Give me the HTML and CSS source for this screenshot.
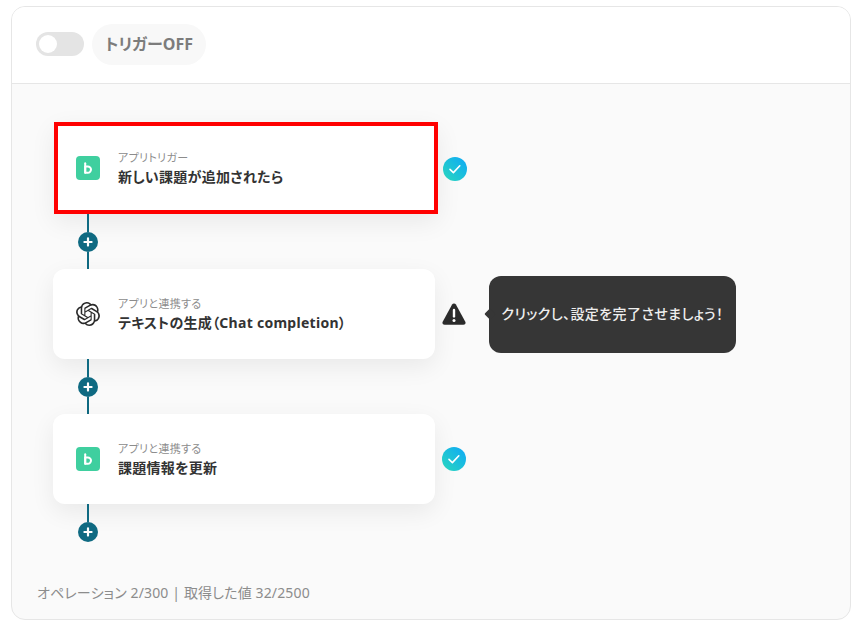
FILE: index.html
```html
<!DOCTYPE html>
<html lang="ja">
<head>
<meta charset="utf-8">
<title>Flow</title>
<link rel="stylesheet" href="styles.css">
</head>
<body>
<main class="panel">
  <header class="panel-head">
    <span class="toggle"><span class="knob"></span></span>
    <span class="pill">トリガーOFF</span>
  </header>
  <section class="panel-body">
    <div class="flow">
      <div class="step step-selected">
        <div class="card card-selected">
          <svg class="app-icon" viewBox="0 0 24 24"><rect width="24" height="24" rx="4" fill="#3fcf9f"/><path d="M9.200 7.200v9.600" fill="none" stroke="#fff" stroke-width="2" stroke-linecap="round"/><path d="M9.200 10.400h2.600a3.200 3.200 0 0 1 0 6.400H9.200z" fill="none" stroke="#fff" stroke-width="2" stroke-linejoin="round"/></svg>
          <div class="card-text"><span class="card-label">アプリトリガー</span><span class="card-title">新しい課題が追加されたら</span></div>
        </div>
        <svg class="status status-selected" viewBox="0 0 24 24"><circle cx="12" cy="12" r="12" fill="url(#g1)"/><path d="M7 12.400l3.400 3.200 6.400-6.800" fill="none" stroke="#fff" stroke-width="1.600" stroke-linecap="round" stroke-linejoin="round"/><defs><linearGradient id="g1" x1="0" y1="1" x2="1" y2="0"><stop offset="0" stop-color="#2ad8bc"/><stop offset="1" stop-color="#0ea8f8"/></linearGradient></defs></svg>
      </div>
      <div class="connector"><span class="line"></span><span class="plus"><svg viewBox="0 0 20 20"><path d="M10 6.400v7.200M6.400 10h7.200" stroke="#fff" stroke-width="2.200" stroke-linecap="round"/></svg></span><span class="line"></span></div>
      <div class="step">
        <div class="card">
          <svg class="app-icon" viewBox="0 0 24 24"><path fill="#2b2b2b" d="M22.2819 9.8211a5.9847 5.9847 0 0 0-.5157-4.9108 6.0462 6.0462 0 0 0-6.5098-2.9A6.0651 6.0651 0 0 0 4.9807 4.1818a5.9847 5.9847 0 0 0-3.9977 2.9 6.0462 6.0462 0 0 0 .7427 7.0966 5.98 5.98 0 0 0 .511 4.9107 6.051 6.051 0 0 0 6.5146 2.9001A5.9847 5.9847 0 0 0 13.2599 24a6.0557 6.0557 0 0 0 5.7718-4.2058 5.9894 5.9894 0 0 0 3.9977-2.9001 6.0557 6.0557 0 0 0-.7475-7.0729zm-9.022 12.6081a4.4755 4.4755 0 0 1-2.8764-1.0408l.1419-.0804 4.7783-2.7582a.7948.7948 0 0 0 .3927-.6813v-6.7369l2.02 1.1686a.071.071 0 0 1 .038.052v5.5826a4.504 4.504 0 0 1-4.4945 4.4944zm-9.6607-4.1254a4.4708 4.4708 0 0 1-.5346-3.0137l.142.0852 4.783 2.7582a.7712.7712 0 0 0 .7806 0l5.8428-3.3685v2.3324a.0804.0804 0 0 1-.0332.0615L9.74 19.9502a4.4992 4.4992 0 0 1-6.1408-1.6464zM2.3408 7.8956a4.485 4.485 0 0 1 2.3655-1.9728V11.6a.7664.7664 0 0 0 .3879.6765l5.8144 3.3543-2.0201 1.1685a.0757.0757 0 0 1-.071 0l-4.8303-2.7865A4.504 4.504 0 0 1 2.3408 7.872zm16.5963 3.8558L13.1038 8.364 15.1192 7.2a.0757.0757 0 0 1 .071 0l4.8303 2.7913a4.4944 4.4944 0 0 1-.6765 8.1042v-5.6772a.79.79 0 0 0-.407-.667zm2.0107-3.0231l-.142-.0852-4.7735-2.7818a.7759.7759 0 0 0-.7854 0L9.409 9.2297V6.8974a.0662.0662 0 0 1 .0284-.0615l4.8303-2.7866a4.4992 4.4992 0 0 1 6.6802 4.66zM8.3065 12.863l-2.02-1.1638a.0804.0804 0 0 1-.038-.0567V6.0742a4.4992 4.4992 0 0 1 7.3757-3.4537l-.142.0805L8.704 5.459a.7948.7948 0 0 0-.3927.6813zm1.0976-2.3654l2.602-1.4998 2.6069 1.4998v2.9994l-2.5974 1.4997-2.6067-1.4997Z"/></svg>
          <div class="card-text"><span class="card-label">アプリと連携する</span><span class="card-title">テキストの生成（Chat completion）</span></div>
        </div>
        <svg class="status" viewBox="0 0 24 24"><path fill="#2b2b2b" d="M12 1.400c.8 0 1.500.4 1.900 1.100l9.400 17.200c.8 1.500-.2 3.100-1.900 3.100H2.600C.9 22.800-.1 21.200.7 19.700l9.400-17.200c.4-.7 1.100-1.100 1.900-1.100z"/><path d="M12 8v6.400" stroke="#fff" stroke-width="2.400" stroke-linecap="round"/><circle cx="12" cy="18.500" r="1.500" fill="#fff"/></svg>
        <div class="tooltip">クリックし、設定を完了させましょう！</div>
      </div>
      <div class="connector"><span class="line"></span><span class="plus"><svg viewBox="0 0 20 20"><path d="M10 6.400v7.200M6.400 10h7.200" stroke="#fff" stroke-width="2.200" stroke-linecap="round"/></svg></span><span class="line"></span></div>
      <div class="step">
        <div class="card">
          <svg class="app-icon" viewBox="0 0 24 24"><rect width="24" height="24" rx="4" fill="#3fcf9f"/><path d="M9.200 7.200v9.600" fill="none" stroke="#fff" stroke-width="2" stroke-linecap="round"/><path d="M9.200 10.400h2.600a3.200 3.200 0 0 1 0 6.400H9.200z" fill="none" stroke="#fff" stroke-width="2" stroke-linejoin="round"/></svg>
          <div class="card-text"><span class="card-label">アプリと連携する</span><span class="card-title">課題情報を更新</span></div>
        </div>
        <svg class="status" viewBox="0 0 24 24"><circle cx="12" cy="12" r="12" fill="url(#g2)"/><path d="M7 12.400l3.400 3.200 6.400-6.800" fill="none" stroke="#fff" stroke-width="1.600" stroke-linecap="round" stroke-linejoin="round"/><defs><linearGradient id="g2" x1="0" y1="1" x2="1" y2="0"><stop offset="0" stop-color="#2ad8bc"/><stop offset="1" stop-color="#0ea8f8"/></linearGradient></defs></svg>
      </div>
      <div class="connector connector-end"><span class="line"></span><span class="plus"><svg viewBox="0 0 20 20"><path d="M10 6.400v7.200M6.400 10h7.200" stroke="#fff" stroke-width="2.200" stroke-linecap="round"/></svg></span></div>
    </div>
    <footer class="usage">オペレーション 2/300 | 取得した値 32/2500</footer>
  </section>
</main>
</body>
</html>
```

FILE: styles.css
```css
* { box-sizing: border-box; }
html, body { margin: 0; height: 100%; background: #fff; }
body {
  font-family: "Noto Sans", "Noto Sans CJK JP", sans-serif;
  font-feature-settings: "palt";
  padding: 6px 9px 5px 11px;
  overflow: hidden;
}
.panel {
  height: 614px;
  border: 1px solid #e6e6e6;
  border-radius: 14px;
  overflow: hidden;
  display: flex;
  flex-direction: column;
  background: #fafafa;
}
.panel-head {
  flex: none;
  height: 77px;
  background: #fff;
  border-bottom: 1px solid #e6e6e6;
  display: flex;
  align-items: center;
  gap: 8px;
  padding: 0 0 2px 24px;
}
.toggle {
  width: 48px;
  height: 24px;
  border-radius: 12px;
  background: #e4e4e4;
  padding: 3px 0 0 3px;
}
.knob {
  display: block;
  width: 18px;
  height: 18px;
  border-radius: 50%;
  background: #fff;
}
.pill {
  height: 41px;
  width: 114px;
  border-radius: 21px;
  background: #f8f8f8;
  color: #7c7c7c;
  font-size: 16px;
  font-weight: 700;
  line-height: 40px;
  text-align: center;
}
.panel-body {
  flex: 1;
  display: flex;
  flex-direction: column;
  padding: 38px 0 0 41px;
}
.step {
  display: flex;
  align-items: center;
  height: 90px;
}
.step-selected { height: 92px; }
.card {
  width: 382px;
  height: 90px;
  background: #fff;
  border-radius: 12px;
  box-shadow: 0 8px 24px rgba(0, 0, 0, .07);
  display: flex;
  align-items: center;
  gap: 18px;
  padding-left: 23px;
}
.card-selected {
  width: 384px;
  height: 92px;
  margin-left: 1px;
  border: 4px solid #f00;
  border-radius: 0;
  padding-left: 18px;
}
.app-icon { width: 24px; height: 24px; flex: none; }
.card-text {
  display: flex;
  flex-direction: column;
  padding-top: 3px;
}
.card-label {
  font-size: 11px;
  letter-spacing: .03em;
  line-height: 14px;
  color: #8c8c8c;
}
.card-title {
  font-size: 14px;
  letter-spacing: .02em;
  line-height: 24px;
  font-weight: 700;
  color: #333;
}
.status {
  width: 24px;
  height: 24px;
  flex: none;
  margin-left: 7px;
}
.status-selected { margin-left: 5px; margin-top: 2px; }
.tooltip {
  position: relative;
  margin-left: 23px;
  width: 247px;
  height: 77px;
  border-radius: 12px;
  background: #363636;
  color: #eee;
  font-size: 14px;
  letter-spacing: .03em;
  font-weight: 500;
  line-height: 75px;
  text-align: center;
  white-space: nowrap;
}
.tooltip::before {
  content: "";
  position: absolute;
  left: -3px;
  top: 34px;
  width: 8px;
  height: 8px;
  background: #363636;
  border-radius: 1px;
  transform: rotate(45deg);
}
.connector {
  width: 20px;
  height: 55px;
  margin-left: 25px;
  display: flex;
  flex-direction: column;
  align-items: center;
}
.connector-end { height: 38px; }
.line { flex: 1; width: 2px; background: #0f6a82; }
.plus {
  flex: none;
  width: 20px;
  height: 20px;
  display: block;
}
.plus svg {
  display: block;
  width: 20px;
  height: 20px;
  border-radius: 50%;
  background: #0f6a82;
}
.usage {
  margin-top: auto;
  margin-left: -16px;
  padding-bottom: 16px;
  font-size: 14px;
  letter-spacing: .01em;
  line-height: 20px;
  color: #8c8c8c;
}
```
